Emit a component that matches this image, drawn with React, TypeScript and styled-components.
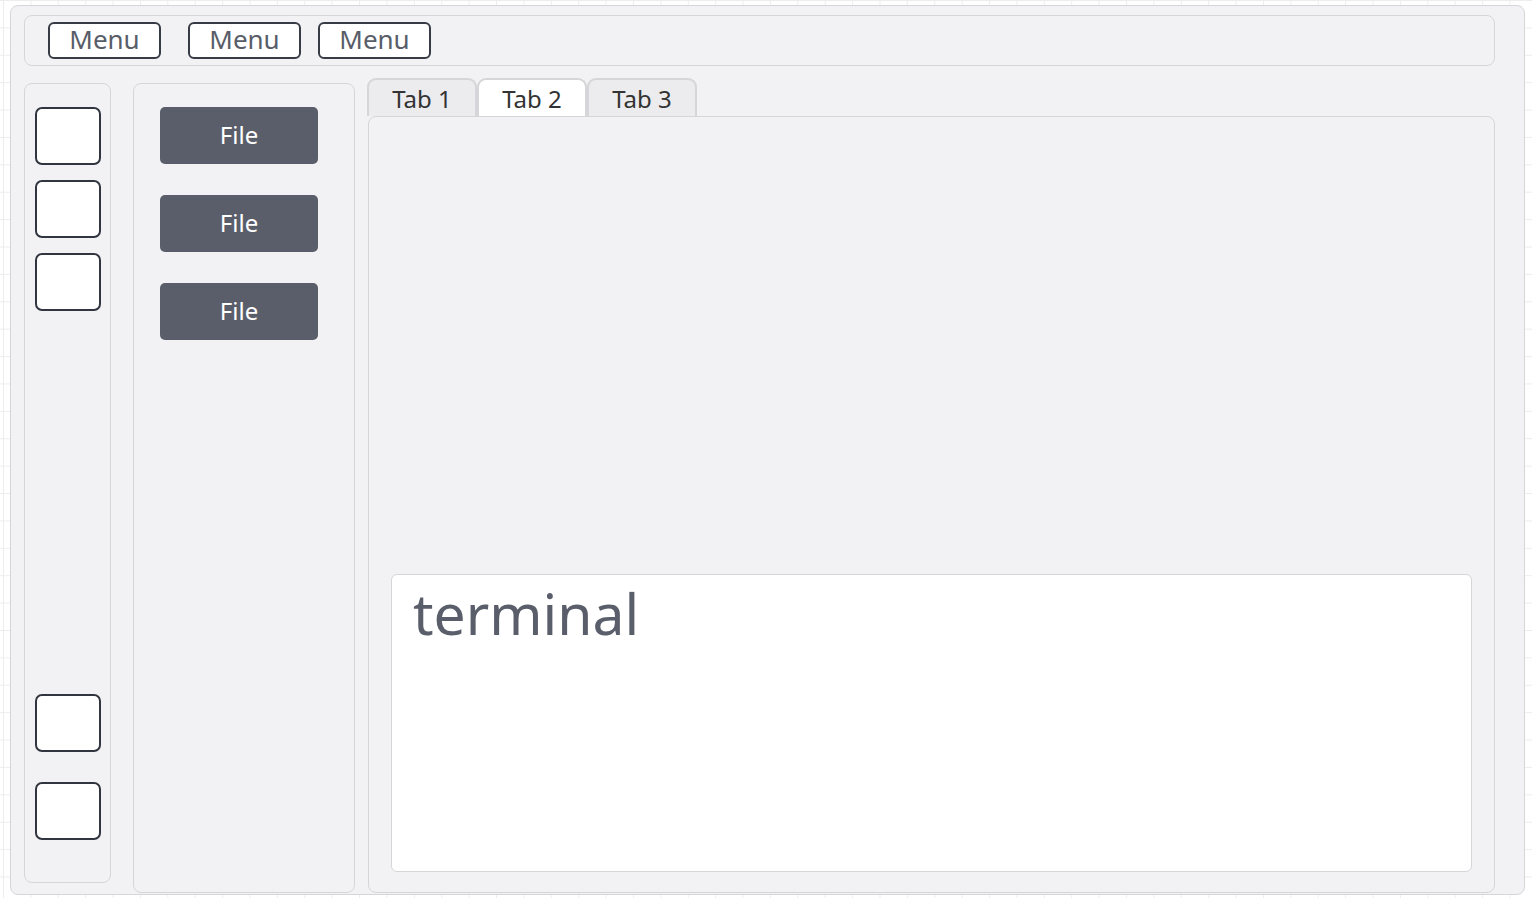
import React from 'react';
import styled, { createGlobalStyle } from 'styled-components';

const GlobalStyle = createGlobalStyle`
  html, body {
    margin: 0;
    padding: 0;
    background-color: #ffffff;
    background-image:
      linear-gradient(to right, #ededed 1px, transparent 1px),
      linear-gradient(to bottom, #ededed 1px, transparent 1px);
    background-size: 27.4px 27.4px;
    background-position: 3px 0;
    font-family: "Noto Sans", "Open Sans", sans-serif;
  }
`;

const Page = styled.div`
  width: 1532px;
  height: 898px;
  box-sizing: border-box;
  padding: 5px 7px 3px 10px;
`;

const Frame = styled.div`
  box-sizing: border-box;
  height: 100%;
  background: #f2f2f4;
  border: 1.5px solid #d6d6da;
  border-radius: 8px;
  padding: 9px 29px 0 13px;
  display: flex;
  flex-direction: column;
`;

const Header = styled.div`
  box-sizing: border-box;
  height: 51px;
  border: 1.5px solid #d6d6da;
  border-radius: 8px;
  padding: 6px 0 0 23px;
  display: flex;
  align-items: flex-start;
`;

const MenuButton = styled.button<{ $gap: number }>`
  box-sizing: border-box;
  width: 113px;
  height: 37px;
  margin-left: ${(p) => p.$gap}px;
  background: #ffffff;
  border: 2px solid #363b45;
  border-radius: 6px;
  color: #585d69;
  font-family: "Noto Sans", sans-serif;
  font-size: 26px;
  line-height: 1;
  padding: 0 0 4px;
  display: flex;
  align-items: center;
  justify-content: center;
`;

const Body = styled.div`
  flex: 1;
  display: flex;
  align-items: flex-start;
  margin-top: 12px;
  min-height: 0;
`;

const Panel = styled.div<{ $w: number; $h: number; $gap: number }>`
  box-sizing: border-box;
  width: ${(p) => p.$w}px;
  height: ${(p) => p.$h}px;
  margin-left: ${(p) => p.$gap}px;
  margin-top: 5px;
  border: 1.5px solid #d6d6da;
  border-radius: 8px;
  flex-shrink: 0;
`;

const Dock = styled(Panel)`
  padding: 23px 0 42px 10px;
  display: flex;
  flex-direction: column;
`;

const DockGroup = styled.div`
  display: flex;
  flex-direction: column;
  gap: 15px;
`;

const DockBottom = styled(DockGroup)`
  margin-top: auto;
  gap: 30px;
`;

const Slot = styled.div`
  box-sizing: border-box;
  width: 66px;
  height: 58px;
  background: #ffffff;
  border: 2px solid #30353f;
  border-radius: 7px;
`;

const Files = styled(Panel)`
  padding: 23px 0 0 26px;
  display: flex;
  flex-direction: column;
  gap: 31px;
`;

const FileButton = styled.button`
  width: 158px;
  height: 57px;
  border: none;
  border-radius: 5px;
  background: #5a5e6b;
  color: #ffffff;
  font-family: "Noto Sans", sans-serif;
  font-size: 24px;
  padding: 0 0 2px;
`;

const Main = styled.div`
  flex: 1;
  margin-left: 12px;
  display: flex;
  flex-direction: column;
  align-self: stretch;
`;

const TabRow = styled.div`
  display: flex;
  height: 38px;
`;

const Tab = styled.div<{ $active?: boolean }>`
  box-sizing: border-box;
  width: 110px;
  height: 38px;
  background: ${(p) => (p.$active ? '#ffffff' : '#ececee')};
  border: 2px solid #d6d6da;
  border-bottom: none;
  border-radius: 9px 9px 0 0;
  color: #333333;
  font-size: 24px;
  display: flex;
  align-items: center;
  justify-content: center;
  padding-top: 0;
`;

const Content = styled.div`
  flex: 1;
  box-sizing: border-box;
  margin-left: 1px;
  margin-bottom: 1px;
  border: 1.5px solid #d6d6da;
  border-radius: 8px;
  padding: 0 22px 20px 22px;
  display: flex;
  flex-direction: column;
  justify-content: flex-end;
`;

const Terminal = styled.div`
  box-sizing: border-box;
  height: 298px;
  background: #ffffff;
  border: 1.5px solid #d6d6da;
  border-radius: 6px;
  padding: 0 0 0 21px;
  color: #5a5e6b;
  font-size: 57px;
  line-height: 76px;
`;

export default function App() {
  return (
    <>
      <GlobalStyle />
      <Page>
        <Frame>
          <Header>
            <MenuButton $gap={0}>Menu</MenuButton>
            <MenuButton $gap={27}>Menu</MenuButton>
            <MenuButton $gap={17}>Menu</MenuButton>
          </Header>
          <Body>
            <Dock $w={87} $h={800} $gap={0}>
              <DockGroup>
                <Slot />
                <Slot />
                <Slot />
              </DockGroup>
              <DockBottom>
                <Slot />
                <Slot />
              </DockBottom>
            </Dock>
            <Files $w={222} $h={810} $gap={22}>
              <FileButton>File</FileButton>
              <FileButton>File</FileButton>
              <FileButton>File</FileButton>
            </Files>
            <Main>
              <TabRow>
                <Tab>Tab 1</Tab>
                <Tab $active>Tab 2</Tab>
                <Tab>Tab 3</Tab>
              </TabRow>
              <Content>
                <Terminal>terminal</Terminal>
              </Content>
            </Main>
          </Body>
        </Frame>
      </Page>
    </>
  );
}
